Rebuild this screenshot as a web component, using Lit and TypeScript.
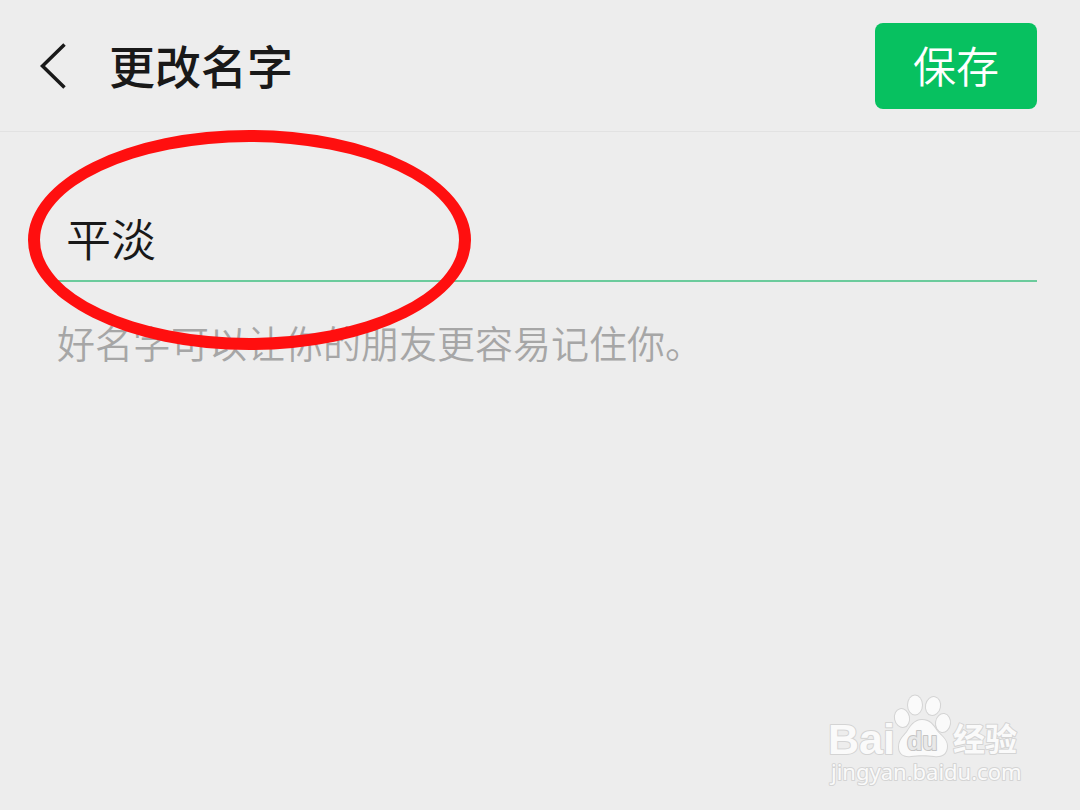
import { LitElement, html, css } from "lit";
import { customElement, state } from "lit/decorators.js";

@customElement("baidu-watermark")
class BaiduWatermark extends LitElement {
  static styles = css`
    :host {
      display: block;
    }
    .logo {
      display: block;
      width: 210px;
      height: 100px;
    }
    .shape {
      fill: #fafafa;
      stroke: #d4d4d4;
      stroke-width: 2px;
      paint-order: stroke;
      stroke-linejoin: round;
    }
    .latin {
      font: 700 43px "Liberation Sans", sans-serif;
    }
    .cjk {
      font: 700 32px "Noto Sans CJK SC", sans-serif;
    }
    .du {
      font: 700 25px "Liberation Sans", sans-serif;
      fill: #e8e8e8;
      stroke: #c4c4c4;
    }
    .site {
      font: 400 22px "Noto Sans", sans-serif;
    }
  `;

  render() {
    return html`
      <svg class="logo" viewBox="0 0 210 100" role="img" aria-label="Baidu 经验">
        <text class="shape latin" x="6" y="62">Bai</text>
        <ellipse class="shape" cx="80" cy="26" rx="7" ry="9" transform="rotate(-12 80 26)" />
        <ellipse class="shape" cx="93" cy="13" rx="7" ry="9.500" />
        <ellipse class="shape" cx="111" cy="14" rx="7" ry="9" transform="rotate(12 111 14)" />
        <ellipse class="shape" cx="121" cy="31" rx="7" ry="9" transform="rotate(8 121 31)" />
        <path
          class="shape"
          d="M100 28C92 28 88 35 85 40C81 45 77 48 77 55C77 62 82 65 89 64C96 63 105 63 112 64C120 65 125 62 125 54C125 47 119 44 115 39C111 33 108 28 100 28Z"
        />
        <text class="shape du" x="85" y="58">du</text>
        <text class="shape cjk" x="131" y="59">经验</text>
        <text class="shape site" x="9" y="88">jingyan.baidu.com</text>
      </svg>
    `;
  }
}

@customElement("app-root")
class AppRoot extends LitElement {
  static styles = css`
    :host {
      display: block;
      position: relative;
      min-height: 100vh;
      overflow: hidden;
      background: #ededed;
      color: #191919;
      font-family: "Noto Sans CJK SC", sans-serif;
    }
    .bar {
      display: flex;
      align-items: center;
      padding: 23px 43px 22px 36px;
      border-bottom: 1px solid #e2e2e2;
    }
    .back {
      display: flex;
      padding: 0;
      border: 0;
      background: none;
      color: inherit;
    }
    .chevron {
      width: 34px;
      height: 48px;
      fill: none;
      stroke: currentColor;
      stroke-width: 3.500px;
    }
    .title {
      flex: 1;
      margin: 0 0 0 39px;
      padding-bottom: 4px;
      font-size: 46px;
      font-weight: 500;
      line-height: 64px;
    }
    .save {
      padding: 9px 38px 13px;
      border: 0;
      border-radius: 8px;
      background: #07c160;
      color: #fff;
      font: inherit;
      font-size: 43px;
      font-weight: 350;
      line-height: 64px;
    }
    .form {
      position: relative;
      padding: 68px 43px 0 57px;
    }
    .name {
      display: block;
      box-sizing: border-box;
      width: 100%;
      height: 82px;
      padding: 0 9px 6px;
      border: 0;
      border-bottom: 2px solid #6bcb9c;
      border-radius: 0;
      outline: none;
      background: none;
      color: inherit;
      font: inherit;
      font-size: 45px;
      font-weight: 350;
    }
    .hint {
      display: block;
      margin: 32px 0 0;
      color: #a6a6a6;
      font-size: 38px;
      font-weight: 350;
      line-height: 56px;
    }
    .ring {
      position: absolute;
      left: 28px;
      top: -2px;
      box-sizing: border-box;
      width: 443px;
      height: 220px;
      border: 12px solid #ff0f0f;
      border-radius: 50%;
      pointer-events: none;
    }
    .watermark {
      position: absolute;
      right: 48px;
      bottom: 18px;
    }
  `;

  @state() private name = "平淡";

  private onInput(e: Event) {
    this.name = (e.target as HTMLInputElement).value;
  }

  render() {
    return html`
      <header class="bar">
        <button class="back" type="button" aria-label="返回">
          <svg class="chevron" viewBox="0 0 34 48" aria-hidden="true">
            <path d="M28.500 2.500L6.500 24L28.500 45.500" />
          </svg>
        </button>
        <h1 class="title">更改名字</h1>
        <button class="save" type="submit" form="name-form">保存</button>
      </header>
      <form class="form" id="name-form" @submit=${(e: Event) => e.preventDefault()}>
        <input class="name" id="name" type="text" aria-label="名字" .value=${this.name} @input=${this.onInput} />
        <label class="hint" for="name">好名字可以让你的朋友更容易记住你。</label>
        <div class="ring"></div>
      </form>
      <baidu-watermark class="watermark"></baidu-watermark>
    `;
  }
}
